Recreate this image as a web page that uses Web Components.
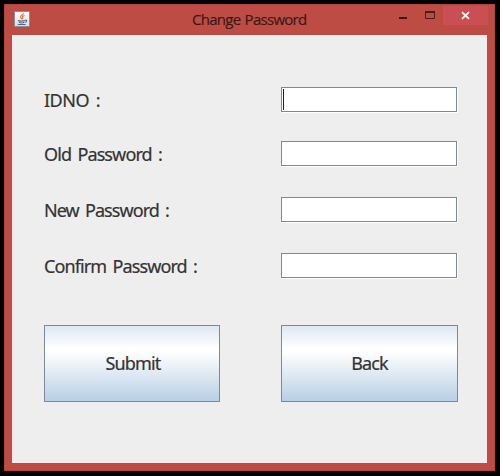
<!DOCTYPE html>
<html lang="en">
<head>
<meta charset="utf-8">
<title>Change Password</title>
<style>
html, body { margin: 0; height: 100%; background: #000; overflow: hidden; }
</style>
</head>
<body>
<app-window caption="Change Password">
  <form-grid>
    <field-row focused style="--gap:29px;--w:56px">IDNO :</field-row>
    <field-row style="--gap:31px;--w:118px">Old Password :</field-row>
    <field-row style="--gap:31px;--w:125px">New Password :</field-row>
    <field-row style="--w:153px">Confirm Password :</field-row>
  </form-grid>
  <push-button slot="actions" style="width:176px;padding-left:2px">Submit</push-button>
  <push-button slot="actions" style="width:177px">Back</push-button>
</app-window>
<script>
const define = (name, html, init) => {
  const template = document.createElement('template');
  template.innerHTML = html;
  customElements.define(name, class extends HTMLElement {
    constructor() {
      super();
      this.attachShadow({ mode: 'open' }).append(template.content.cloneNode(true));
    }
    connectedCallback() { if (init) init(this, this.shadowRoot); }
  });
};

define('java-icon', `
<style>:host{display:block;width:16px;height:16px}svg{display:block}</style>
<svg width="16" height="16" viewBox="0 0 16 16" fill="none">
  <defs><linearGradient id="g" x1="0" y1="0" x2="0" y2="1"><stop stop-color="#fff"/><stop offset="1" stop-color="#d3dde4"/></linearGradient></defs>
  <rect x=".5" y=".5" width="15" height="15" rx="1" fill="url(#g)" stroke="#8b8d98"/>
  <path d="M9.4 2C9.8 3.8 6 4.4 6.6 6.2C6.8 6.9 7.5 7.2 7.6 8.2M10.6 4.5C8.4 5.2 8 5.9 8.7 6.7C9 7.2 8.7 7.7 8.4 8.2" stroke="#e5743a" stroke-width="1.2"/>
  <path d="M4 9.5C5 10.4 10 10.2 10.8 9.5M5 11.3C6.5 12 9 11.9 10.2 11.3M3.8 13.4H11.6M10.9 9.2C13.6 8.4 13.3 11 10.8 11.3" stroke="#4b6b86" stroke-width="1.05"/>
</svg>`);

define('caption-controls', `
<style>
:host{display:flex;height:19px;margin-top:2px}
svg{display:block;flex:none}
.close{background:#c94f53;width:45px;flex:none}
</style>
<svg width="53" height="19" viewBox="0 0 53 19" fill="none">
  <rect x="9" y="11" width="8" height="2" fill="#3d1715"/>
  <path d="M35.5 6H44.5V12.5H35.5Z" stroke="#4e1d18"/><path d="M35 6H45" stroke="#4e1d18" stroke-width="2"/>
</svg>
<div class="close"><svg width="45" height="19" viewBox="0 0 45 19"><path d="M19 6.2L26 12.8M26 6.2L19 12.8" stroke="#fff" stroke-width="1.8"/></svg></div>`);

define('app-window', `
<style>
:host{display:flex;flex-direction:column;box-sizing:border-box;width:491px;height:467px;margin:4px 0 0 4px;background:#bd4c45;padding:0 8px 8px;box-shadow:inset 0 0 0 1px #b7443c}
header{display:grid;grid-template-columns:102px 1fr 97px;height:31px;flex:none;width:475px}
java-icon{margin:7px 0 0 2px}
h1{margin:0 0 0 78px;font:15px/30px "Open Sans",sans-serif;color:#3a1714;white-space:nowrap;letter-spacing:-.72px;word-spacing:1px;-webkit-text-stroke:.15px #3a1714}
main{flex:1;background:#eee;padding:52px 29px 0 32px;box-shadow:inset 0 0 0 1px #f3e9e8}
.actions{display:flex;gap:61px;margin-top:47px}
</style>
<header><java-icon></java-icon><h1></h1><caption-controls></caption-controls></header>
<main><slot></slot><div class="actions"><slot name="actions"></slot></div></main>`,
(host, root) => { root.querySelector('h1').textContent = host.getAttribute('caption'); });

define('form-grid', `<style>:host{display:flex;flex-direction:column}</style><slot></slot>`);

/* Stretches or tightens letter spacing so a caption fills its nominal width. */
const fit = (label, width, count) => {
  label.style.letterSpacing = (width - label.getBoundingClientRect().width) / count + 'px';
};

define('field-row', `
<style>
:host{display:grid;grid-template-columns:237px 177px;height:25px;margin-bottom:var(--gap,0)}
label{justify-self:start;font:18px/27px "Noto Sans",sans-serif;color:#333;white-space:nowrap;word-spacing:2.5px;-webkit-text-stroke:.2px #333}
.box{box-sizing:border-box;width:176px;height:25px;background:#fff;border:1px solid #7a8a99;box-shadow:1px 1px #fff;padding:1px}
.caret{display:none;width:1px;height:21px;background:#222}
:host([focused]) .caret{display:block}
</style>
<label><slot></slot></label><div class="box"><div class="caret"></div></div>`,
(host, root) => {
  fit(root.querySelector('label'), parseFloat(host.style.getPropertyValue('--w')), host.textContent.length);
});

define('push-button', `
<style>
:host{display:flex;box-sizing:border-box;height:77px;border:1px solid #7a8a99;background:linear-gradient(#dde8f3 0,#fff 30%,#fff 34%,#b8cfe5 100%);align-items:center;justify-content:center;padding-bottom:2px;font:18px/24px "Noto Sans",sans-serif;color:#333;letter-spacing:-.85px;-webkit-text-stroke:.2px #333}
</style>
<slot></slot>`);
</script>
</body>
</html>
